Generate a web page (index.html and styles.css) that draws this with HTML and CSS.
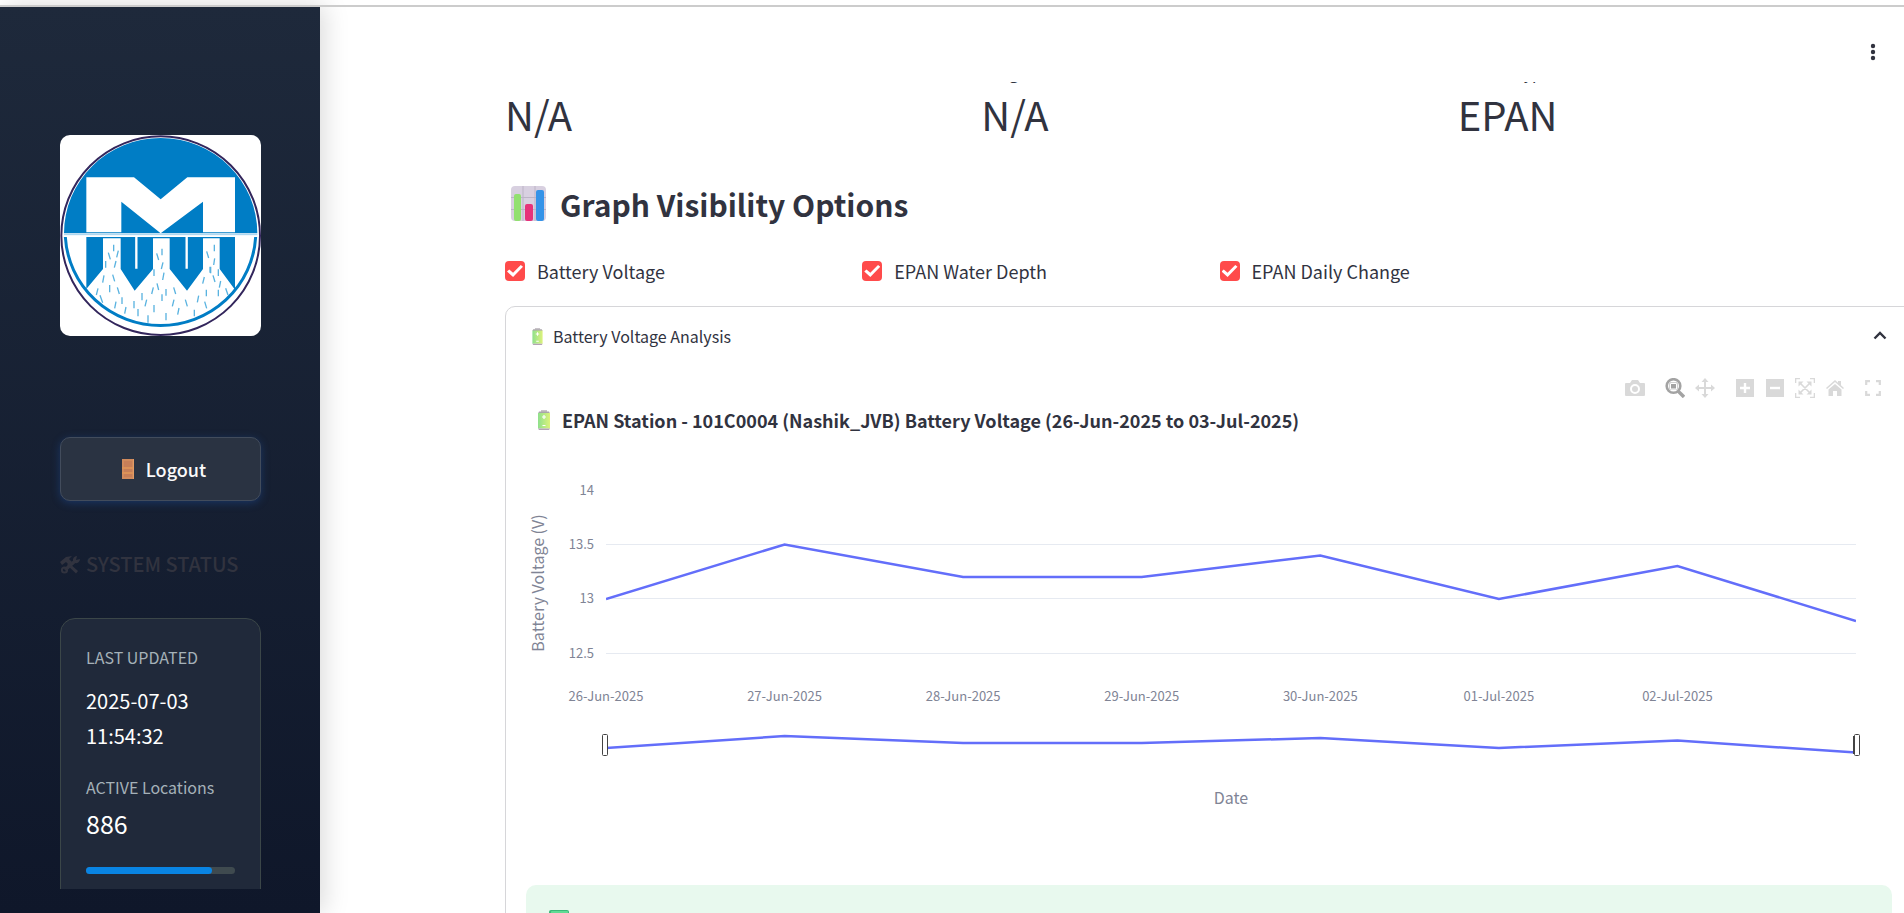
FILE: index.html
```html
<!DOCTYPE html>
<html lang="en">
<head>
<meta charset="utf-8">
<title>EPAN Station Dashboard</title>
<link rel="stylesheet" href="styles.css">
</head>
<body>
<div class="app">
  <aside class="sidebar">
    <div class="sidebar-scroll">
      <svg class="logo" viewBox="0 0 603 603" role="img" aria-label="Station network logo">
        <rect width="603" height="603" fill="#fff"/>
        <circle cx="302" cy="302" r="298" fill="#fff" stroke="#33265c" stroke-width="6"/>
        <path d="M12 295a290 286 0 0 1 580 0z" fill="#007dc5"/>
        <path d="M16 306a286 282 0 0 0 571 0" fill="none" stroke="#007dc5" stroke-width="9"/>
        <path d="M79 127h143l80 66 80-66h143v165h-96v-92l-127 95-118-95v92H79z" fill="#fff"/>
        <path d="M79 306h446v158l-46-62v-92h-50v92l-48 65-52-65v-92h-50v92l-55 65-42-65v-92h-53v92l-50 60z" fill="#007dc5"/>
        <path d="M229 306v95M380 306v95" stroke="#fff" stroke-width="7"/>
        <path d="M12 299h580" stroke="#9ed0ee" stroke-width="3"/>
        <path d="M161 329v20M145 353l6 20M175 347l-5 20M137 378v20M168 378l-5 20M132 421l-4 22M158 419l6 20M149 450v22M114 460l-5 20M120 481l8 22M172 457l6 20M168 500l-4 20M186 487v20M198 516l-4 20M222 498v22M234 522v22M246 474v22M260 494l-5 20M282 510v22M264 563v-22M280 457l-5 20M291 445l5 20M282 403v20M312 413l-4 22M309 382l-5 20M290 355l6 20M306 341v20M306 478v20M318 462v20M341 457l6 20M342 494l-5 20M318 534v22M357 519l-4 20M376 494l6 20M403 524v20M416 482l-4 20M434 500l6 20M439 464v20M433 426l-5 20M440 349l6 20M463 329v20M464 370l-3 20M452 395v20M459 421l6 20M475 403v20M482 438l-4 20M475 464v20M497 460l7 20M450 395v18" fill="none" stroke="#5ab3e0" stroke-width="4"/>
      </svg>
      <button class="logout" type="button">
        <svg width="12" height="20" viewBox="0 0 12 20" aria-hidden="true"><path d="M0 0h12v20H0z" fill="#d08a5c"/><path d="M2 2h8v6H2zM2 10h8v3H2zM2 15h8v3H2z" fill="#c77f58"/><path d="M0 9h12M0 14h12" stroke="#e79a55"/><path d="M11.500 0v20" stroke="#e29b66"/></svg>
        <span>Logout</span>
      </button>
      <h3 class="status-title">
        <svg width="21" height="19" viewBox="0 0 21 19" aria-hidden="true"><path d="M0 7l6-5 6-1-3 3 3 3-3 3-3-3-4 3zM9 8l9 8-2 2.500-9-8.500z" fill="currentColor"/><path d="M5 15L15 6" stroke="currentColor" stroke-width="3.500"/><circle cx="4.500" cy="15" r="2.600" fill="none" stroke="currentColor" stroke-width="2"/><path d="M17 1l-1 4 4-1a4 4 0 0 1-5 4l-2-2a4 4 0 0 1 4-5z" fill="currentColor"/></svg>
        <span>SYSTEM STATUS</span>
      </h3>
      <section class="status-card">
        <p class="status-label">LAST UPDATED</p>
        <p class="status-date">2025-07-03 11:54:32</p>
        <p class="status-label">ACTIVE Locations</p>
        <p class="status-count">886</p>
        <div class="meter"><div class="meter-fill"></div></div>
      </section>
    </div>
  </aside>

  <main class="main">
    <header class="topbar">
      <button class="menu" type="button" aria-label="Main menu">
        <svg width="6" height="18" viewBox="0 0 6 18"><circle cx="3" cy="3" r="2.200"/><circle cx="3" cy="9" r="2.200"/><circle cx="3" cy="15" r="2.200"/></svg>
      </button>
    </header>
    <div class="content">
      <section class="metrics">
        <div><div class="metric-label">Latitude</div><div class="metric-value">N/A</div></div>
        <div><div class="metric-label">Longitude</div><div class="metric-value">N/A</div></div>
        <div><div class="metric-label">Station Type</div><div class="metric-value">EPAN</div></div>
      </section>

      <h2 class="heading">
        <svg width="36" height="36" viewBox="0 0 36 36" aria-hidden="true"><rect x="0" y="0" width="35" height="35" rx="4" fill="#d8d0e0"/><path d="M0 11.500h35M0 23.500h35M12 0v35M24 0v35" stroke="#bcb4c6"/><rect x="3" y="8" width="7" height="27" rx="2" fill="#92e070"/><rect x="14" y="18" width="8" height="17" rx="2" fill="#e6327a"/><rect x="25" y="4" width="8" height="31" rx="2" fill="#3493e8"/></svg>
        <span>Graph Visibility Options</span>
      </h2>

      <div class="options">
        <label class="option"><input type="checkbox" checked><span>Battery Voltage</span></label>
        <label class="option"><input type="checkbox" checked><span>EPAN Water Depth</span></label>
        <label class="option"><input type="checkbox" checked><span>EPAN Daily Change</span></label>
      </div>

      <section class="expander">
        <button class="summary" type="button" aria-expanded="true">
          <svg class="battery-small" viewBox="0 0 12 20" aria-hidden="true"><use href="#battery"/></svg>
          <span>Battery Voltage Analysis</span>
          <svg class="chevron" width="14" height="10" viewBox="0 0 14 10"><path d="M1.500 7.500L7 2l5.500 5.500" fill="none" stroke="#31333f" stroke-width="2.400"/></svg>
        </button>
        <div class="modebar">
          <svg width="20" height="20" viewBox="0 0 20 20"><path d="M1 5h4l2-3h6l2 3h4q1 0 1 1v11q0 1-1 1H1q-1 0-1-1V6q0-1 1-1z"/><circle cx="10" cy="11" r="4" fill="none" stroke="#fff" stroke-width="2"/></svg>
          <svg class="active gap-wide" width="20" height="20" viewBox="0 0 20 20"><circle cx="8.500" cy="8" r="6.800" fill="none" stroke="currentColor" stroke-width="2.600"/><path d="M4.500 4.500h8v7h-8z"/><path d="M5.500 5.500h6v5.500h-6z" stroke="#fff" fill="none"/><path d="M13 13l6 6" stroke="currentColor" stroke-width="3.400"/></svg>
          <svg class="gap" width="20" height="20" viewBox="0 0 20 20"><path d="M10 0l3.500 4H11v5h5V6.500l4 3.500-4 3.500V11h-5v5h2.500L10 20l-3.500-4H9v-5H4v2.500L0 10l4-3.500V9h5V4H6.500z"/></svg>
          <svg class="gap-wide" width="20" height="20" viewBox="0 0 20 20"><path d="M1 1h18v18H1z"/><path d="M10 5v10M5 10h10" stroke="#fff" stroke-width="2.400"/></svg>
          <svg class="gap" width="20" height="20" viewBox="0 0 20 20"><path d="M1 1h18v18H1z"/><path d="M5 10h10" stroke="#fff" stroke-width="2.400"/></svg>
          <svg class="gap" width="20" height="20" viewBox="0 0 20 20"><path d="M.5 5V.5H5M15 .5h4.500V5M19.500 15v4.500H15M5 19.500H.5V15M5 5l10 10M15 5L5 15" fill="none" stroke="currentColor" stroke-width="1.600"/><path d="M3.500 3.500h5l-5 5zM16.500 3.500h-5l5 5zM3.500 16.500h5l-5-5zM16.500 16.500h-5l5-5z"/></svg>
          <svg class="gap" width="20" height="20" viewBox="0 0 20 20"><path d="M1 10l9-8 3 2.700V3h3v4.300L19 10l-1 1-8-7-8 7z"/><path d="M10 6l6.500 5.500V18H12v-5H8v5H3.500v-6.500z"/></svg>
          <svg class="fullscreen" width="16" height="16" viewBox="0 0 16 16"><path d="M1.200 5V1.200H5M11 1.200h3.800V5M14.800 11v3.800H11M5 14.800H1.200V11" fill="none" stroke="currentColor" stroke-width="2.200"/></svg>
        </div>
        <h4 class="chart-title">
          <svg class="battery-large" viewBox="0 0 12 20" aria-hidden="true"><use href="#battery"/></svg>
          <span>EPAN Station - 101C0004 (Nashik_JVB) Battery Voltage (26-Jun-2025 to 03-Jul-2025)</span>
        </h4>
        <div class="chart">
          <svg class="plot" width="100%" height="340" role="img" aria-label="Battery voltage by date">
            <g class="grid"><line x1="0" x2="100%" y1="74.500" y2="74.500"/><line x1="0" x2="100%" y1="128.500" y2="128.500"/><line x1="0" x2="100%" y1="183.500" y2="183.500"/></g>
            <svg x="0" y="0" width="100%" height="340" viewBox="0 0 1250 340" preserveAspectRatio="none">
              <polyline class="series" points="0,129 178.600,74.500 357.100,107 535.700,107 714.300,85.500 892.900,129 1071.400,96 1250,151"/>
              <polyline class="series" points="0,278 178.600,266 357.100,273 535.700,273 714.300,268 892.900,278 1071.400,270.500 1250,282.500"/>
            </svg>
            <g class="tick tick-y"><text x="-12" y="25">14</text><text x="-12" y="79">13.5</text><text x="-12" y="133">13</text><text x="-12" y="188">12.5</text></g>
            <g class="tick tick-x"><text x="0" y="231">26-Jun-2025</text><text x="14.286%" y="231">27-Jun-2025</text><text x="28.571%" y="231">28-Jun-2025</text><text x="42.857%" y="231">29-Jun-2025</text><text x="57.143%" y="231">30-Jun-2025</text><text x="71.429%" y="231">01-Jul-2025</text><text x="85.714%" y="231">02-Jul-2025</text></g>
            <text class="axis" x="50%" y="334">Date</text>
            <text class="axis" transform="translate(-62 113) rotate(-90)">Battery Voltage (V)</text>
            <rect class="handle" x="-3.500" y="264.500" width="5" height="21" rx="1"/>
            <svg x="100%" y="0" overflow="visible"><rect class="handle" x="-2.500" y="266.500" width="1" height="17"/><rect class="handle" x="-1.500" y="264.500" width="5" height="21" rx="1"/></svg>
          </svg>
        </div>
        <div class="alert">
          <svg width="20" height="20" viewBox="0 0 20 20" aria-hidden="true"><rect width="20" height="20" rx="2" fill="#3cb878"/><rect x="2" y="1" width="17" height="18" rx="1" fill="#5fdc94"/></svg>
        </div>
      </section>
    </div>
  </main>
</div>
<svg class="defs" width="0" height="0" aria-hidden="true">
  <defs>
    <linearGradient id="cell"><stop offset="0" stop-color="#8fe08c"/><stop offset="1" stop-color="#dcf27c"/></linearGradient>
    <g id="battery"><path d="M3 0h6v2H3z" fill="#c9c4c9"/><path d="M1 1.500h10l1 2H0z" fill="#a9a5aa"/><path d="M0 3h12v15.500H0z" fill="url(#cell)"/><path d="M0 18.500h12l-1 1.500H1z" fill="#b3a3b5"/><path d="M6 5v4M4 7h4M4.500 15.500h3" stroke="#fff" stroke-width="1.200"/></g>
  </defs>
</svg>
</body>
</html>
```
FILE: styles.css
```css
* { box-sizing: border-box; }
html, body { height: 100%; }
body {
  margin: 0;
  overflow: hidden;
  background: #fff;
  color: #31333f;
  font-family: "Noto Sans CJK SC", "Noto Sans", sans-serif;
  font-size: 18px;
  line-height: 1.5;
}
h2, h3, h4, p { margin: 0; }
button { font: inherit; color: inherit; background: none; border: 0; padding: 0; }
svg { display: block; flex: none; }
.defs { position: absolute; }

.app {
  display: flex;
  height: 100%;
  padding-top: 5px;
}
.app::before {
  content: "";
  position: absolute;
  left: 0;
  right: 0;
  top: 5px;
  height: 2px;
  background: #ccc;
  z-index: 3;
}

.sidebar {
  flex: 0 0 320px;
  padding: 130px 59px 24px 60px;
  background: linear-gradient(180deg, #1e293b, #0f172a);
  box-shadow: 4px 0 24px rgba(0, 0, 0, 0.15);
  z-index: 2;
}
.sidebar-scroll { height: 100%; overflow: hidden; margin: 0 -10px; padding: 0 10px; }
.logo { width: 100%; border-radius: 10px; }
.logout {
  display: flex;
  align-items: center;
  justify-content: center;
  gap: 12px;
  width: 100%;
  height: 64px;
  margin-top: 101px;
  padding-left: 7px;
  border: 1px solid #424c5c;
  border-radius: 10px;
  background: #2a3342;
  box-shadow: 0 2px 8px rgba(30, 80, 160, 0.45);
  color: #fafafa;
  font-weight: 500;
}
.status-title {
  display: flex;
  align-items: center;
  gap: 5px;
  margin-top: 48px;
  color: #31333f;
  font-size: 20px;
  font-weight: 500;
  line-height: 30px;
  white-space: nowrap;
}
.status-card {
  height: 320px;
  margin-top: 39px;
  padding: 24px 25px;
  border: 1px solid #3b4648;
  border-radius: 15px;
  background: #20293a;
}
.status-label { color: #a5b1b8; font-size: 16px; line-height: 28px; }
.status-date { margin: 12px 0 20px; color: #fff; font-size: 20px; font-weight: 400; line-height: 35px; }
.status-count { margin-top: 2px; color: #fff; font-size: 25px; font-weight: 400; line-height: 40px; }
.meter { height: 7px; margin-top: 24px; border-radius: 4px; background: #3f4a4f; }
.meter-fill { width: 84.500%; height: 100%; border-radius: 4px; background: #0984e3; }

.main { flex: 1; min-width: 0; overflow: hidden; }
.topbar {
  position: relative;
  z-index: 1;
  display: flex;
  justify-content: flex-end;
  height: 77px;
  padding: 38px 28px 0 0;
  background: #fff;
}
.menu { height: 18px; fill: #31333f; }
.content { margin: -22px -10px 0 0; padding-left: 185px; }

.metrics {
  display: grid;
  grid-template-columns: repeat(3, 1fr);
  gap: 20px;
}
.metric-label { font-size: 16px; line-height: 24px; }
.metric-value { font-size: 40px; line-height: 60px; }

.heading {
  display: flex;
  align-items: center;
  gap: 13px;
  margin-top: 36px;
  padding-left: 6px;
  font-size: 30px;
  font-weight: 600;
  line-height: 48px;
}
.options { display: grid; grid-template-columns: repeat(4, 1fr); gap: 20px; margin-top: 28px; }
.option { display: flex; align-items: center; gap: 12px; height: 30px; white-space: nowrap; }
.option input {
  appearance: none;
  flex: none;
  width: 20px;
  height: 20px;
  margin: 0;
  border-radius: 4px;
  background: #ff4b4b;
  display: grid;
  place-items: center;
}
.option input::before {
  content: "";
  width: 16px;
  height: 12px;
  background: #fff;
  clip-path: polygon(0 55%, 14% 38%, 38% 65%, 86% 0, 100% 14%, 38% 100%);
}

.expander {
  margin-top: 20px;
  border: 1px solid #d6d6d9;
  border-radius: 10px;
  height: 700px;
}
.summary {
  display: flex;
  align-items: center;
  gap: 10px;
  width: 100%;
  height: 58px;
  padding: 0 26px;
  font-size: 16px;
}
.battery-small { width: 11px; height: 17px; }
.battery-large { width: 12px; height: 20px; }
.chevron { margin-left: auto; }
.modebar {
  display: flex;
  align-items: center;
  justify-content: flex-end;
  height: 20px;
  margin-top: 13px;
  padding-right: 32px;
  color: #d9d9d9;
  fill: currentColor;
}
.modebar .active { color: #a3a3a3; }
.gap { margin-left: 10px; }
.gap-wide { margin-left: 20px; }
.fullscreen { margin-left: 20px; }
.chart-title {
  display: flex;
  align-items: center;
  gap: 12px;
  margin-top: 8px;
  padding-left: 32px;
  font-size: 18px;
  font-weight: 700;
  line-height: 28px;
}
.chart { margin: 36px 57px 0 100px; }
.plot { overflow: visible; }
.grid { stroke: #e6eaf1; }
.series { fill: none; stroke: #636efa; stroke-width: 2.5px; vector-effect: non-scaling-stroke; }
.tick { fill: #808495; font-size: 13px; }
.tick-y { text-anchor: end; }
.tick-x { text-anchor: middle; }
.axis { fill: #808495; font-size: 16px; text-anchor: middle; }
.handle { fill: #fff; stroke: #444; }
.alert {
  height: 100px;
  margin: 75px 21px 0 20px;
  padding: 25px 23px;
  border-radius: 10px;
  background: #e8f9ee;
}
```
